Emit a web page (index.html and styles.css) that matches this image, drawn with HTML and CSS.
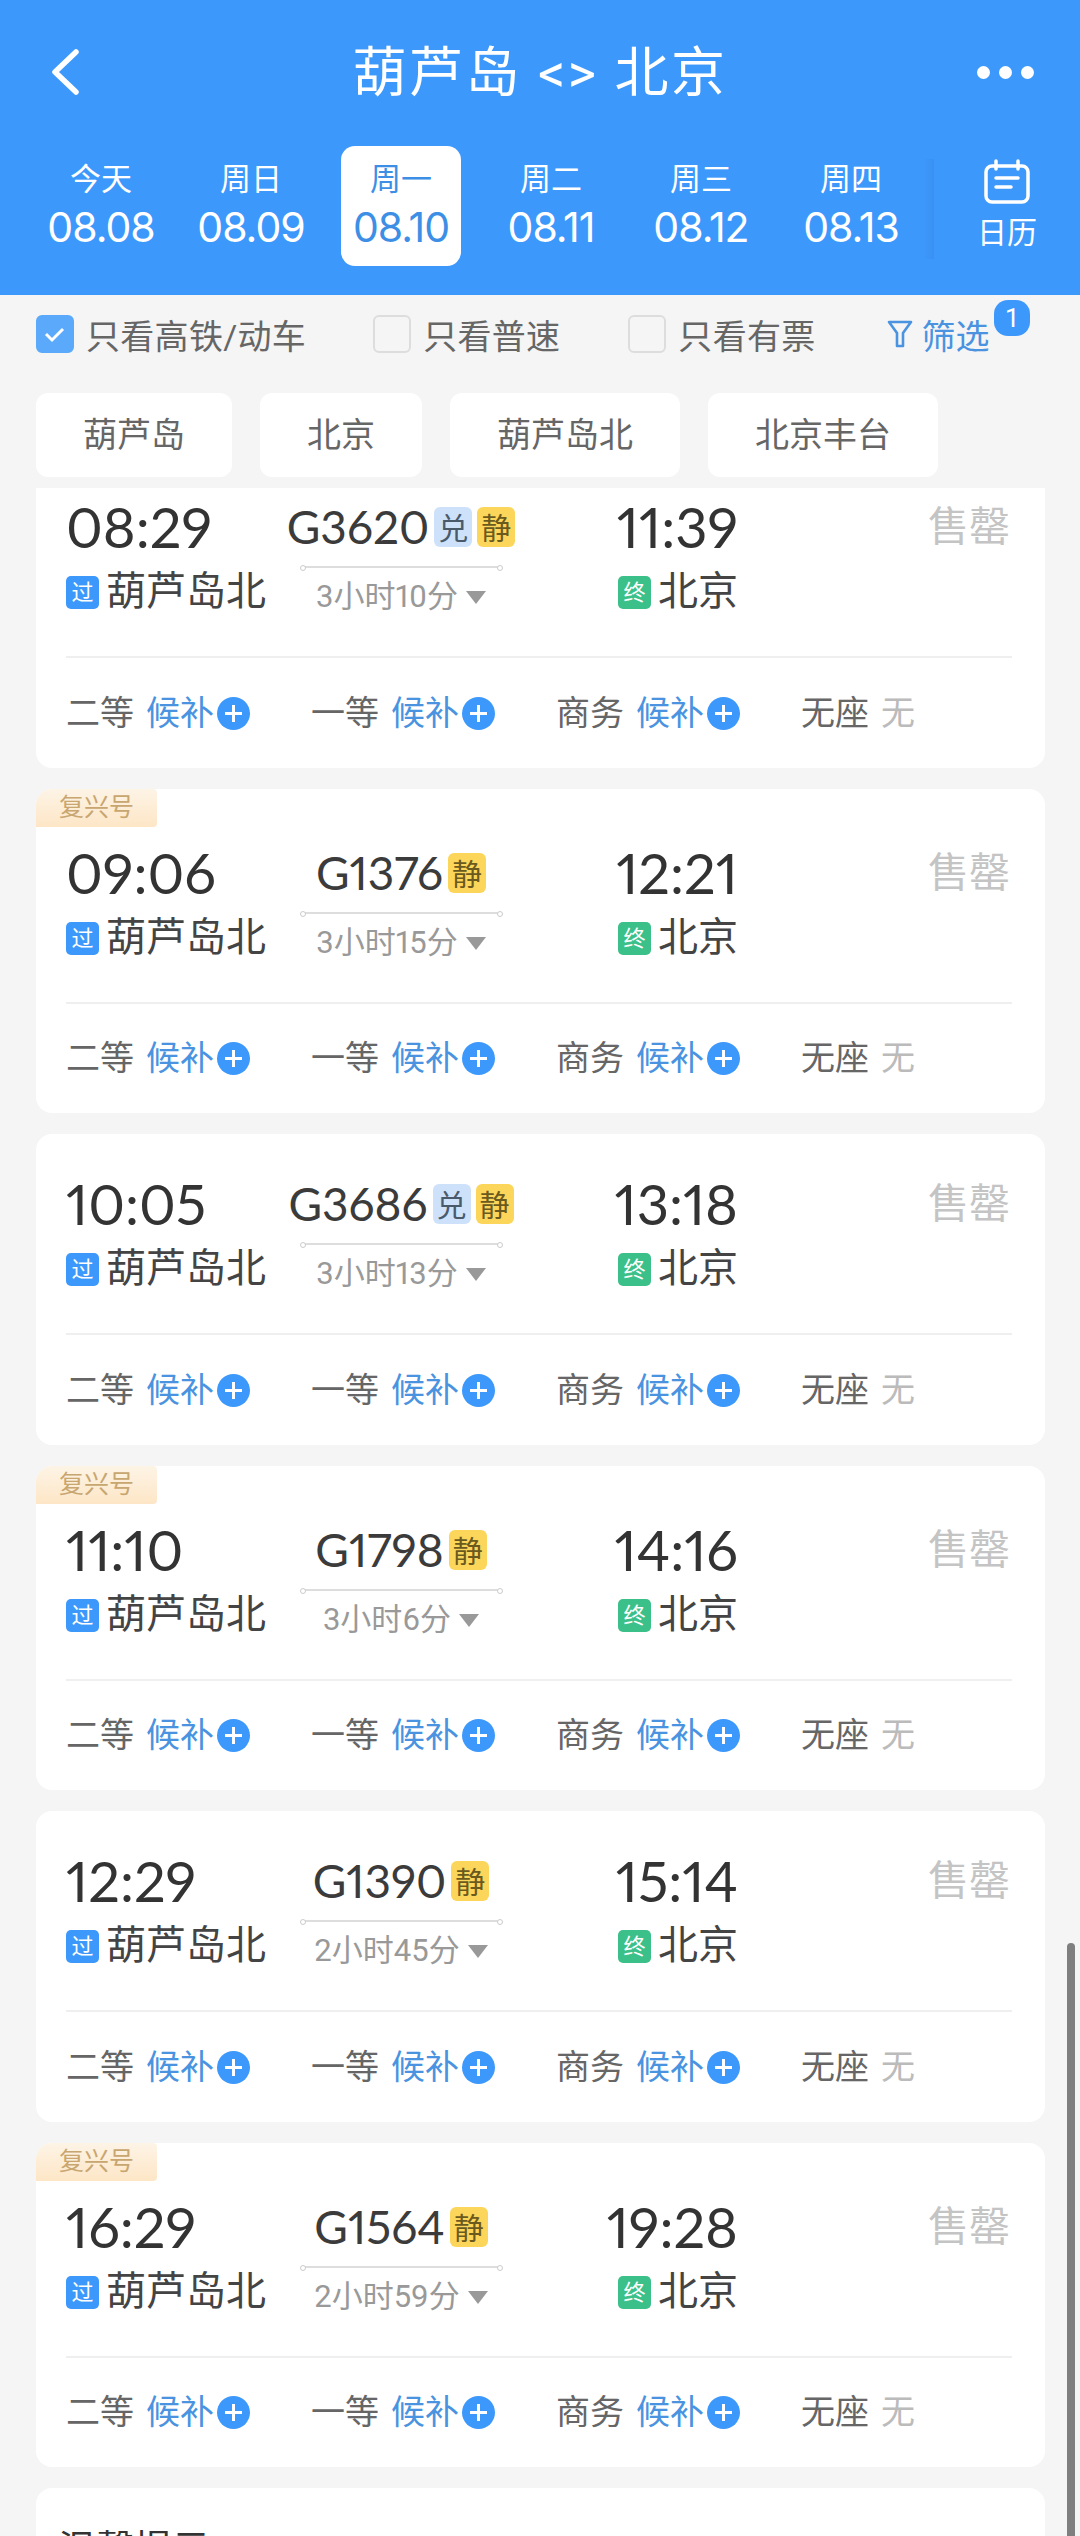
FILE: index.html
```html
<!DOCTYPE html>
<html lang="zh-CN">

<head>
    <meta charset="UTF-8">
    <title>葫芦岛 - 北京</title>
    <link rel="stylesheet" href="styles.css">
</head>

<body>
    <div class="page">
        <header class="top">
            <div class="title-bar">
                <svg class="back" viewBox="0 0 34 46" width="34" height="46"><path d="M28 3 L7 23 L28 43" fill="none" stroke="#fff" stroke-width="5.5" stroke-linecap="round" stroke-linejoin="round"/></svg>
                <h1 class="title">葫芦岛 &lt;&gt; 北京</h1>
                <div class="dots"><i></i><i></i><i></i></div>
            </div>
            <div class="dates">
                <div class="day"><span class="wk">今天</span><span class="dt">08.08</span></div>
                <div class="day"><span class="wk">周日</span><span class="dt">08.09</span></div>
                <div class="day active"><span class="wk">周一</span><span class="dt">08.10</span></div>
                <div class="day"><span class="wk">周二</span><span class="dt">08.11</span></div>
                <div class="day"><span class="wk">周三</span><span class="dt">08.12</span></div>
                <div class="day"><span class="wk">周四</span><span class="dt">08.13</span></div>
                <div class="cal">
                    <svg viewBox="0 0 46 46" width="46" height="46" fill="none" stroke="#fff" stroke-width="3.5" stroke-linecap="round"><rect x="2" y="7" width="42" height="36" rx="6"/><path d="M12 2v8M34 2v8M12 19h22M12 28h15"/></svg>
                    <span>日历</span>
                </div>
            </div>
        </header>

        <div class="filters">
            <label class="check on"><span class="box"><svg viewBox="0 0 24 24" width="24" height="24"><path d="M3 12l6 6 11-11" fill="none" stroke="#fff" stroke-width="3"/></svg></span>只看高铁/动车</label>
            <label class="check second"><span class="box"></span>只看普速</label>
            <label class="check third"><span class="box"></span>只看有票</label>
            <div class="screen">
                <svg viewBox="0 0 26 30" width="26" height="30" fill="none" stroke="#4a93e0" stroke-width="2.6" stroke-linecap="round" stroke-linejoin="round"><path d="M2 3h22l-8 11v13h-6V14z"/></svg>
                <span>筛选</span>
                <b class="count">1</b>
            </div>
        </div>

        <div class="chips">
            <span class="chip">葫芦岛</span>
            <span class="chip">北京</span>
            <span class="chip">葫芦岛北</span>
            <span class="chip">北京丰台</span>
        </div>

        <div class="list">
            <article class="card first">
                <div class="main">
                    <div class="col from"><div class="time">08:29</div><div class="st"><em class="pass">过</em>葫芦岛北</div></div>
                    <div class="col mid"><div class="no">G3620<em class="tag dui">兑</em><em class="tag jing">静</em></div><div class="line"></div><div class="dur">3小时10分<i class="arrow"></i></div></div>
                    <div class="col to"><div class="time">11:39</div><div class="st"><em class="end">终</em>北京</div></div>
                    <div class="sold">售罄</div>
                </div>
                <div class="seats">
                    <div class="seat">二等<span class="wait">候补</span><i class="plus"></i></div>
                    <div class="seat">一等<span class="wait">候补</span><i class="plus"></i></div>
                    <div class="seat">商务<span class="wait">候补</span><i class="plus"></i></div>
                    <div class="seat">无座<span class="none">无</span></div>
                </div>
            </article>

            <article class="card">
                <span class="fux">复兴号</span>
                <div class="main">
                    <div class="col from"><div class="time">09:06</div><div class="st"><em class="pass">过</em>葫芦岛北</div></div>
                    <div class="col mid"><div class="no">G1376<em class="tag jing">静</em></div><div class="line"></div><div class="dur">3小时15分<i class="arrow"></i></div></div>
                    <div class="col to"><div class="time">12:21</div><div class="st"><em class="end">终</em>北京</div></div>
                    <div class="sold">售罄</div>
                </div>
                <div class="seats">
                    <div class="seat">二等<span class="wait">候补</span><i class="plus"></i></div>
                    <div class="seat">一等<span class="wait">候补</span><i class="plus"></i></div>
                    <div class="seat">商务<span class="wait">候补</span><i class="plus"></i></div>
                    <div class="seat">无座<span class="none">无</span></div>
                </div>
            </article>

            <article class="card">
                <div class="main">
                    <div class="col from"><div class="time">10:05</div><div class="st"><em class="pass">过</em>葫芦岛北</div></div>
                    <div class="col mid"><div class="no">G3686<em class="tag dui">兑</em><em class="tag jing">静</em></div><div class="line"></div><div class="dur">3小时13分<i class="arrow"></i></div></div>
                    <div class="col to"><div class="time">13:18</div><div class="st"><em class="end">终</em>北京</div></div>
                    <div class="sold">售罄</div>
                </div>
                <div class="seats">
                    <div class="seat">二等<span class="wait">候补</span><i class="plus"></i></div>
                    <div class="seat">一等<span class="wait">候补</span><i class="plus"></i></div>
                    <div class="seat">商务<span class="wait">候补</span><i class="plus"></i></div>
                    <div class="seat">无座<span class="none">无</span></div>
                </div>
            </article>

            <article class="card">
                <span class="fux">复兴号</span>
                <div class="main">
                    <div class="col from"><div class="time">11:10</div><div class="st"><em class="pass">过</em>葫芦岛北</div></div>
                    <div class="col mid"><div class="no">G1798<em class="tag jing">静</em></div><div class="line"></div><div class="dur">3小时6分<i class="arrow"></i></div></div>
                    <div class="col to"><div class="time">14:16</div><div class="st"><em class="end">终</em>北京</div></div>
                    <div class="sold">售罄</div>
                </div>
                <div class="seats">
                    <div class="seat">二等<span class="wait">候补</span><i class="plus"></i></div>
                    <div class="seat">一等<span class="wait">候补</span><i class="plus"></i></div>
                    <div class="seat">商务<span class="wait">候补</span><i class="plus"></i></div>
                    <div class="seat">无座<span class="none">无</span></div>
                </div>
            </article>

            <article class="card">
                <div class="main">
                    <div class="col from"><div class="time">12:29</div><div class="st"><em class="pass">过</em>葫芦岛北</div></div>
                    <div class="col mid"><div class="no">G1390<em class="tag jing">静</em></div><div class="line"></div><div class="dur">2小时45分<i class="arrow"></i></div></div>
                    <div class="col to"><div class="time">15:14</div><div class="st"><em class="end">终</em>北京</div></div>
                    <div class="sold">售罄</div>
                </div>
                <div class="seats">
                    <div class="seat">二等<span class="wait">候补</span><i class="plus"></i></div>
                    <div class="seat">一等<span class="wait">候补</span><i class="plus"></i></div>
                    <div class="seat">商务<span class="wait">候补</span><i class="plus"></i></div>
                    <div class="seat">无座<span class="none">无</span></div>
                </div>
            </article>

            <article class="card">
                <span class="fux">复兴号</span>
                <div class="main">
                    <div class="col from"><div class="time">16:29</div><div class="st"><em class="pass">过</em>葫芦岛北</div></div>
                    <div class="col mid"><div class="no">G1564<em class="tag jing">静</em></div><div class="line"></div><div class="dur">2小时59分<i class="arrow"></i></div></div>
                    <div class="col to"><div class="time">19:28</div><div class="st"><em class="end">终</em>北京</div></div>
                    <div class="sold">售罄</div>
                </div>
                <div class="seats">
                    <div class="seat">二等<span class="wait">候补</span><i class="plus"></i></div>
                    <div class="seat">一等<span class="wait">候补</span><i class="plus"></i></div>
                    <div class="seat">商务<span class="wait">候补</span><i class="plus"></i></div>
                    <div class="seat">无座<span class="none">无</span></div>
                </div>
            </article>

            <article class="card tip">温馨提示</article>
            <div class="scrollbar"></div>
        </div>
    </div>
</body>

</html>
```

FILE: styles.css
```css
* {
    box-sizing: border-box;
}

html,
body {
    margin: 0;
    height: 100%;
}

body {
    background: #f5f5f5;
    font-family: Roboto, "Noto Sans CJK SC", sans-serif;
    font-variant-numeric: proportional-nums;
    overflow: hidden;
}

em,
i {
    font-style: normal;
}

.page {
    display: flex;
    flex-direction: column;
    height: 2536px;
}

/* Blue header */
.top {
    background: #3d98fb;
    height: 295px;
    color: #fff;
    flex: none;
}

.title-bar {
    height: 146px;
    display: flex;
    align-items: center;
    justify-content: center;
    position: relative;
}

.back {
    position: absolute;
    left: 48px;
    top: 49px;
}

.title {
    margin: 2px 0 0;
    font-size: 54px;
    font-weight: 400;
    line-height: 60px;
    letter-spacing: 2.5px;
}

.dots {
    position: absolute;
    right: 46px;
    top: 66px;
    display: flex;
    gap: 9px;
}

.dots i {
    width: 13px;
    height: 13px;
    border-radius: 50%;
    background: #fff;
}

.dates {
    display: flex;
    padding-left: 41px;
}

.day {
    width: 120px;
    height: 120px;
    margin-right: 30px;
    display: flex;
    flex-direction: column;
    align-items: center;
    border-radius: 14px;
    padding-top: 14px;
}

.day.active {
    background: #fff;
    color: #3d8fe6;
}

.wk {
    font-size: 31px;
    line-height: 40px;
}

.dt {
    font-family: Inter, "Noto Sans CJK SC", sans-serif;
    font-size: 41px;
    line-height: 52px;
    letter-spacing: -1px;
    margin-top: 1px;
}

.cal {
    position: relative;
    width: 120px;
    height: 100px;
    margin: 13px 0 0 -3px;
    display: flex;
    flex-direction: column;
    align-items: center;
    font-size: 30px;
    line-height: 40px;
    padding-left: 18px;
}

.cal::before {
    content: "";
    position: absolute;
    left: -14px;
    top: 0;
    bottom: 0;
    width: 10px;
    background: linear-gradient(90deg, rgba(30, 100, 190, 0), rgba(30, 100, 190, .14));
}

.cal span {
    margin-top: 8px;
}

/* Filter row */
.filters {
    flex: none;
    height: 98px;
    display: flex;
    align-items: center;
    padding: 0 0 20px 36px;
    font-size: 34px;
    color: #666;
    position: relative;
}

.check {
    display: flex;
    align-items: center;
    gap: 12px;
    letter-spacing: .3px;
}

.box {
    width: 38px;
    height: 38px;
    border: 2px solid #ddd;
    border-radius: 6px;
    display: flex;
    align-items: center;
    justify-content: center;
}

.check.on .box {
    background: #5aa9fb;
    border-color: #5aa9fb;
}

.check.second {
    margin-left: 67px;
}

.check.third {
    margin-left: 68px;
}

.screen {
    display: flex;
    align-items: center;
    color: #4a93e0;
    margin-left: 71px;
    gap: 9px;
    position: relative;
}

.count {
    position: absolute;
    right: -40px;
    top: -10px;
    width: 36px;
    height: 36px;
    background: #3d98fb;
    border-radius: 14px;
    color: #fff;
    font-size: 26px;
    font-weight: 400;
    line-height: 36px;
    text-align: center;
}

/* Station chips */
.chips {
    flex: none;
    display: flex;
    gap: 28px;
    padding-left: 36px;
    height: 95px;
}

.chip {
    height: 84px;
    padding: 0 47px 6px;
    background: #fff;
    border-radius: 12px;
    font-size: 34px;
    color: #666;
    display: flex;
    align-items: center;
}

/* Train list */
.list {
    flex: 1;
    overflow: hidden;
    position: relative;
    padding: 0 35px 0 36px;
    display: flex;
    flex-direction: column;
    gap: 21px;
}

.card {
    flex: none;
    background: #fff;
    border-radius: 16px;
    padding: 34px 33px 30px 30px;
    position: relative;
}

.card.first {
    border-radius: 0 0 16px 16px;
    padding-top: 3px;
}

.fux {
    position: absolute;
    left: 0;
    top: 0;
    width: 121px;
    height: 38px;
    background: linear-gradient(180deg, #fdf4e6, #fde6c6);
    color: #c8a670;
    font-size: 25px;
    line-height: 38px;
    text-align: center;
    border-radius: 16px 4px 4px 0;
}

.fux + .main {
    margin: 14px 0 -1px;
}

.main {
    display: flex;
    height: 167px;
    border-bottom: 2px solid #efefef;
}

.col.from {
    width: 211px;
}

.col.mid {
    width: 248px;
}

.col.to {
    width: 213px;
    display: flex;
    flex-direction: column;
    align-items: flex-end;
}

.time {
    font-family: Lato, "Noto Sans CJK SC", sans-serif;
    font-size: 56px;
    line-height: 72px;
    color: #333;
}

.st {
    display: flex;
    align-items: center;
    font-size: 40px;
    line-height: 58px;
    color: #444;
    gap: 7px;
}

.pass,
.end {
    width: 33px;
    height: 33px;
    border-radius: 5px;
    color: #fff;
    font-size: 22px;
    line-height: 33px;
    text-align: center;
}

.pass {
    background: #3d98fb;
}

.end {
    background: #3cc08a;
}

.no {
    display: flex;
    align-items: center;
    justify-content: center;
    font-family: Lato, "Noto Sans CJK SC", sans-serif;
    font-size: 46px;
    line-height: 72px;
    color: #3b3b3b;
    gap: 5px;
}

.tag {
    width: 38px;
    height: 40px;
    border-radius: 6px;
    font-size: 30px;
    line-height: 40px;
    text-align: center;
}

.tag.dui {
    background: #cde2fa;
    color: #4a5a6b;
}

.tag.jing {
    background: #fcd65a;
    color: #6b5a1e;
}

.line {
    width: 199px;
    margin: 3px auto 0;
    border-top: 2px solid #ddd;
    position: relative;
}

.line::before,
.line::after {
    content: "";
    position: absolute;
    top: -3px;
    width: 4px;
    height: 4px;
    border: 1px solid #ccc;
    border-radius: 50%;
    background: #fff;
}

.line::before {
    left: -2px;
}

.line::after {
    right: -2px;
}

.dur {
    display: flex;
    align-items: center;
    justify-content: center;
    font-size: 31px;
    line-height: 44px;
    color: #999;
    margin-top: 7px;
    gap: 8px;
}

.arrow {
    width: 0;
    height: 0;
    border-left: 10px solid transparent;
    border-right: 10px solid transparent;
    border-top: 13px solid #999;
}

.sold {
    margin-left: auto;
    font-size: 41px;
    line-height: 50px;
    color: #c4c4c4;
    padding: 11px 2px 0 0;
}

.seats {
    display: flex;
    padding-top: 30px;
}

.seat {
    flex: none;
    width: 245px;
    display: flex;
    align-items: center;
    font-size: 34px;
    line-height: 50px;
    color: #666;
}

.wait {
    color: #4a93e0;
    margin-left: 12px;
}

.none {
    color: #bbb;
    margin-left: 12px;
}

.plus {
    width: 33px;
    height: 33px;
    border-radius: 50%;
    background: #3d98fb;
    position: relative;
    margin-left: 3px;
}

.plus::before,
.plus::after {
    content: "";
    position: absolute;
    background: #fff;
}

.plus::before {
    left: 8px;
    right: 8px;
    top: 15px;
    height: 3px;
}

.plus::after {
    top: 8px;
    bottom: 8px;
    left: 15px;
    width: 3px;
}

.tip {
    padding: 30px 22px 0;
    font-size: 38px;
    color: #333;
}

.scrollbar {
    position: absolute;
    right: 5px;
    top: 1455px;
    width: 8px;
    height: 600px;
    background: #7f7f7f;
    border-radius: 4px;
}
```
